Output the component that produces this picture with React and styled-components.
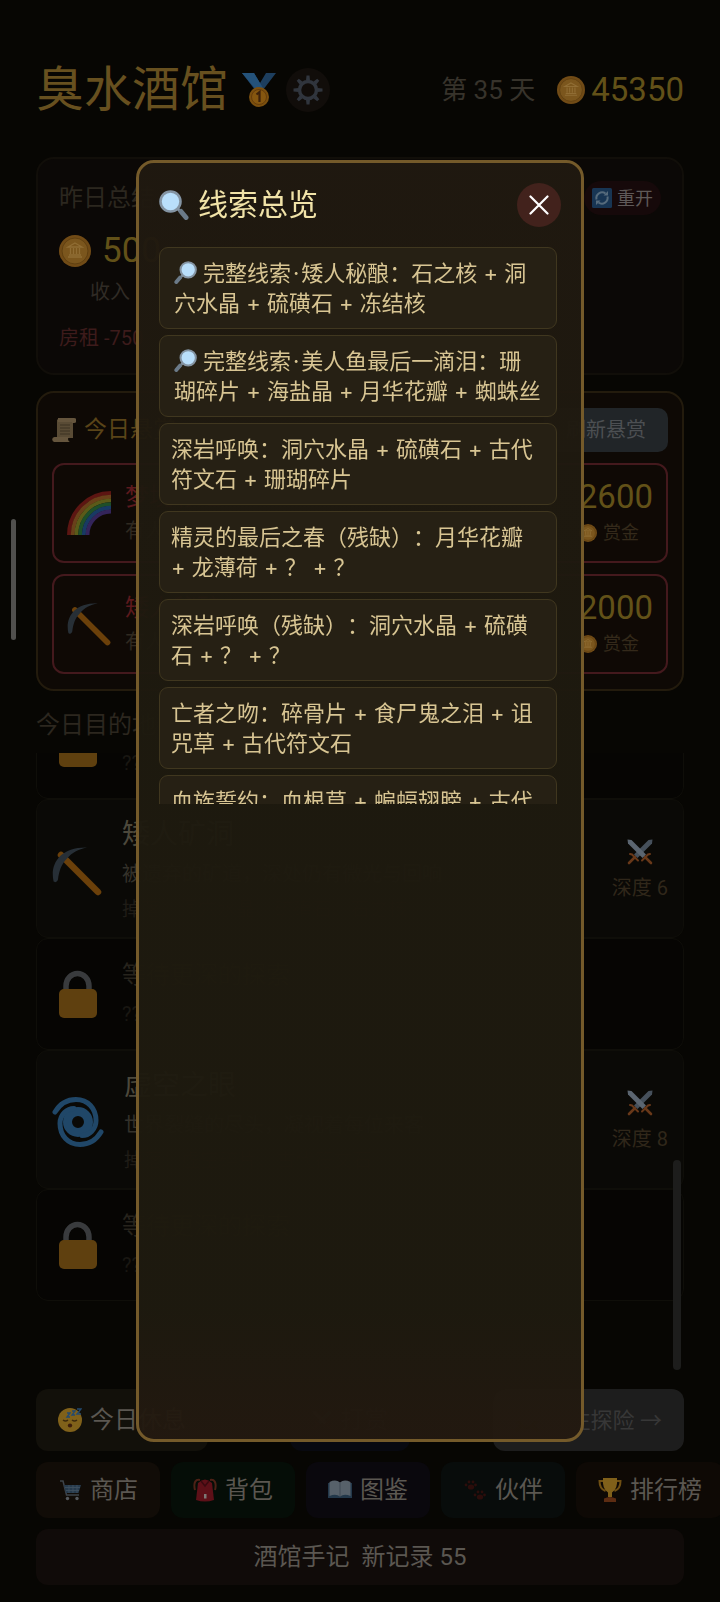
import React from "react";
import styled, { createGlobalStyle } from "styled-components";

const Global = createGlobalStyle`
  * { box-sizing: border-box; }
  body {
    margin: 0;
    background: #070603;
    color: #5a554c;
    font-family: Roboto, "Noto Sans CJK SC", sans-serif;
    line-height: 1.5;
    text-spacing-trim: space-all;
  }
  button { font: inherit; border: 0; cursor: pointer; }
  h1, h2, h3, p, ul { margin: 0; padding: 0; font-weight: 400; }
  ul { list-style: none; }
  svg { display: block; flex: none; }
`;

/* ---------- icons ---------- */

const Svg = ({ size, box = 24, children }) => (
  <svg width={size} height={size} viewBox={`0 0 ${box} ${box}`} fill="none" aria-hidden="true">
    {children}
  </svg>
);

const Coin = ({ size }) => (
  <Svg size={size} box={32}>
    <circle cx="16" cy="16" r="16" fill="#714b16" />
    <circle cx="16" cy="16" r="13" fill="#7b561d" stroke="#604011" strokeWidth="1" />
    <path d="M16 8l7 4H9zM9 22h14M10 20h12M11.500 13v6M14.500 13v6M17.500 13v6M20.500 13v6" stroke="#906d34" strokeWidth="1.300" />
  </Svg>
);

const Medal = () => (
  <Svg size={34} box={34}>
    <path d="M0 0h12l6 10 6-10h10L21 17h-8z" fill="#1d3e5e" />
    <path d="M0 0h12l9 15-6 3z" fill="#24527a" />
    <circle cx="17" cy="24" r="10" fill="#7b4f0e" />
    <circle cx="17" cy="24" r="7.500" fill="#85560f" stroke="#653c0b" />
    <path d="M14.500 21.500l3-2.500v10" stroke="#3c210b" strokeWidth="2.200" />
  </Svg>
);

const Gear = () => (
  <Svg size={30} box={30}>
    <circle cx="15" cy="15" r="8.500" stroke="#30353d" strokeWidth="3.500" />
    {[0, 45, 90, 135, 180, 225, 270, 315].map((a) => (
      <path key={a} d="M13 5.500l.5-5h3l.5 5z" fill="#30353d" transform={`rotate(${a} 15 15)`} />
    ))}
  </Svg>
);

const Magnifier = ({ size, flip }) => (
  <Svg size={size} box={30}>
    <g transform={flip ? "translate(30 0) scale(-1 1)" : undefined}>
      <path d="M18 18l5 5" stroke="#8896a3" strokeWidth="3" />
      <path d="M22 21.500l5 6" stroke="#6b7a88" strokeWidth="5" strokeLinecap="round" />
      <circle cx="11.500" cy="11.500" r="10" fill="#b9dffb" stroke="#8494a3" strokeWidth="2.600" />
    </g>
  </Svg>
);

const Close = () => (
  <Svg size={20} box={20}>
    <path d="M1.500 1.500l17 17M18.500 1.500l-17 17" stroke="#fff" strokeWidth="2.200" strokeLinecap="round" />
  </Svg>
);

const Refresh = () => (
  <Svg size={20} box={20}>
    <rect width="20" height="20" rx="1.500" fill="#183553" />
    <path d="M4.500 11.500a5.800 5.800 0 0 1 9-6M15.500 8.500a5.800 5.800 0 0 1-9 6" stroke="#566b7c" strokeWidth="2" />
    <path d="M11.500 7.500h4.500V3zM8.500 12.500H4V17z" fill="#566b7c" />
  </Svg>
);

const Scroll = () => (
  <Svg size={24}>
    <path d="M5 1.500h16v18.500H5z" fill="#594b35" />
    <path d="M6 0h16a2.500 2.500 0 0 1 0 5h-2V4H6z" fill="#65553d" />
    <path d="M2.500 19H17a3 3 0 0 0 3 5H3a2.500 2.500 0 0 1-.5-5z" fill="#65553d" />
    <path d="M8 7h10M8 10h10M8 13h10M8 16h10" stroke="#3d3222" strokeWidth="1" />
  </Svg>
);

const Rainbow = () => (
  <Svg size={44} box={44}>
    {["#5c1512", "#69401a", "#5b5a19", "#1f4f29", "#183a63", "#33245a"].map((c, i) => (
      <path key={c} d={`M${2 + i * 3.7} 44A${42 - i * 3.7} ${42 - i * 3.7} 0 0 1 44 ${2 + i * 3.7}`} stroke={c} strokeWidth="3.900" />
    ))}
  </Svg>
);

const Pickaxe = ({ size }) => (
  <Svg size={size} box={50}>
    <path d="M9 9l37 37" stroke="#6b400a" strokeWidth="6.500" strokeLinecap="round" />
    <path d="M1.500 35C-2 19 7 1 35 1.500c-9 2-15 5-20 11-6 6-8 13-9 21-1 3-4 3.500-4.500 1.500z" fill="#272f36" />
  </Svg>
);

const Lock = () => (
  <Svg size={50} box={50}>
    <path d="M14 23v-6a11.500 12.500 0 0 1 23 0v6" stroke="#393b3d" strokeWidth="5.500" />
    <rect x="7" y="20" width="38" height="29" rx="5" fill="#5f400f" />
  </Svg>
);

const Vortex = () => (
  <Svg size={52} box={52}>
    <g stroke="#204768" strokeWidth="5" strokeLinecap="round">
      <circle cx="26" cy="26" r="10.500" strokeWidth="9" />
      <path d="M3 16C9 6 16 3.500 24 3.500c12 0 20 9 20 21 0 9-7 15-14 15" />
      <path d="M49 36c-6 10-13 12.500-21 12.500-12 0-20-9-20-21 0-9 7-15 14-15" />
    </g>
  </Svg>
);

const Swords = ({ size = 26, dim }) => (
  <Svg size={size} box={26}>
    <g opacity={dim ? 0.3 : 1}>
      <path d="M8 18l-6 6M18 18l6 6" stroke="#683819" strokeWidth="2.600" strokeLinecap="round" />
      <path d="M25.500.5l-.5 4L10.500 19 7 15.500 21.500 1z" fill="#46505b" />
      <path d="M.5.500l.5 4L15.500 19l3.500-3.500L4.500 1z" fill="#5b6570" />
      <path d="M3 15l2 .5 6 6M23 15l-2 .5-6 6" stroke="#683819" strokeWidth="2" strokeLinecap="round" />
    </g>
  </Svg>
);

const Sleepy = () => (
  <Svg size={24}>
    <circle cx="12" cy="12" r="12" fill="#80611a" />
    <path d="M5 12q2.500 2 5 0M14 12q2.500 2 5 0" stroke="#3d2a0c" strokeWidth="1.500" />
    <ellipse cx="12" cy="17.500" rx="2.200" ry="2" fill="#3d1d0c" />
    <path d="M9 5h3l-3 4h3M14 3h3l-3 4h3M19 1h4l-4 5h4" stroke="#234a70" strokeWidth="1.400" />
  </Svg>
);

const Cart = () => (
  <Svg size={24}>
    <path d="M2 3h3l3.500 14H21" stroke="#3d434a" strokeWidth="1.500" />
    <path d="M6 7h17l-2.500 8H8z" fill="#263a4c" />
    <path d="M7 9.500h15M8 12.500h13M11 7v8M15 7v8M19 7v8" stroke="#415261" strokeWidth=".8" />
    <circle cx="9.500" cy="20.500" r="1.700" fill="#55595e" />
    <circle cx="19" cy="20.500" r="1.700" fill="#55595e" />
  </Svg>
);

const Backpack = () => (
  <Svg size={24}>
    <path d="M2 12C0 4 3 1 7 2M22 12c2-8-1-11-5-10" stroke="#4d2116" strokeWidth="2" />
    <path d="M5 5q7-7 14 0l2 17q-9 3-18 0z" fill="#5d1018" />
    <path d="M8 3l4 5 4-5" stroke="#3a0a10" strokeWidth="1.500" />
    <rect x="11" y="16" width="2.500" height="4.500" fill="#7d7876" />
  </Svg>
);

const Book = () => (
  <Svg size={24}>
    <path d="M0 5h24v15H0z" fill="#23384a" />
    <path d="M1.500 4Q8 1 12 4.500 16 1 22.500 4v14Q16 15.500 12 18.500 8 15.500 1.500 18z" fill="#57616a" />
    <path d="M12 4.500v14" stroke="#414b54" />
  </Svg>
);

const Paws = () => (
  <Svg size={24}>
    <g fill="#2c0d0b">
      {[[3, 4], [12, 14]].map(([x, y]) => (
        <g key={x} transform={`translate(${x} ${y})`}>
          <ellipse cx="5" cy="5" rx="3.200" ry="2.600" />
          <circle cx="0" cy="3" r="1.400" />
          <circle cx="3" cy="0" r="1.400" />
          <circle cx="7" cy="0" r="1.400" />
          <circle cx="9.500" cy="3" r="1.400" />
        </g>
      ))}
    </g>
  </Svg>
);

const Trophy = () => (
  <Svg size={24}>
    <path d="M6 3H1.500q0 8 6 10M18 3h4.500q0 8-6 10" stroke="#6f4f13" strokeWidth="2" />
    <path d="M5 0h14q1 11-5 14.500V19h-4v-4.500Q4 11 5 0z" fill="#80601a" />
    <path d="M6 20.500q6-3 12 0V24H6z" fill="#5d2c12" />
  </Svg>
);

/* ---------- page ---------- */

const Page = styled.main`
  height: 100vh;
  min-height: 1500px;
  padding: 56px 36px 17px;
  display: flex;
  flex-direction: column;
  overflow: hidden;
`;

const Header = styled.header`
  height: 68px;
  margin-bottom: 33px;
  display: flex;
  align-items: center;
  flex: none;
`;

const Title = styled.h1`
  font-size: 48px;
  line-height: 64px;
  color: #67501f;
  margin-right: 14px;
`;

const GearButton = styled.button`
  width: 44px;
  height: 44px;
  margin-left: 10px;
  padding: 0;
  border-radius: 50%;
  background: #110d0a;
  display: grid;
  place-items: center;
`;

const Day = styled.span`
  margin-left: auto;
  margin-right: 22px;
  font-size: 26px;
  color: #37332b;
`;

const Amount = styled.span`
  display: flex;
  align-items: center;
  gap: ${(p) => p.$gap || 6}px;
  font-size: ${(p) => p.$size || 33}px;
  line-height: 40px;
  color: #625118;
`;

const Panel = styled.section`
  flex: none;
  border: 2px solid ${(p) => p.$line};
  border-radius: 18px;
  background: ${(p) => p.$bg};
`;

const Summary = styled(Panel)`
  height: 218px;
  padding: 21px 21px;
  margin-bottom: 16px;
`;

const Between = styled.div`
  display: flex;
  align-items: center;
  justify-content: space-between;
`;

const Label = styled.h2`
  font-size: 24px;
  line-height: 36px;
  color: #2c271f;
`;

const PlacesLabel = styled(Label)`
  flex: none;
  padding: 16px 0 10px;
`;

const RestartButton = styled.button`
  display: flex;
  align-items: center;
  gap: 5px;
  height: 34px;
  padding: 0 8px;
  border-radius: 17px;
  background: #16090a;
  color: #5f5958;
  font-size: 18px;
`;

const Income = styled.div`
  margin-top: 15px;
  display: inline-flex;
  flex-direction: column;
  align-items: center;
`;

const Small = styled.p`
  font-size: ${(p) => p.$size || 20}px;
  line-height: ${(p) => p.$lh || 30}px;
  margin-top: ${(p) => p.$top || 0}px;
  color: ${(p) => p.$color};
  white-space: nowrap;
`;

const Bounties = styled(Panel)`
  padding: 15px 14px;
  display: grid;
  gap: 11px;
`;

const IconLabel = styled.h2`
  display: flex;
  align-items: center;
  gap: 8px;
  font-size: 23px;
  color: #5a4418;
`;

const RefreshButton = styled.button`
  height: 44px;
  padding: 0 22px;
  border-radius: 10px;
  background: #212528;
  color: #4c4f52;
  font-size: 20px;
`;

const BountyRow = styled.article`
  height: 100px;
  border: 2px solid #44191d;
  border-radius: 12px;
  background: #0f0905;
  padding: 0 13px;
  display: flex;
  align-items: center;
  gap: 14px;
`;

const Grow = styled.div`
  flex: 1;
  min-width: 0;
`;

const BountyTitle = styled.h3`
  font-size: 24px;
  line-height: 36px;
  color: #5c191d;
`;

const Reward = styled.div`
  display: flex;
  flex-direction: column;
  align-items: flex-end;
`;

const RewardNote = styled.div`
  display: flex;
  align-items: center;
  gap: 6px;
  padding-right: 14px;
  font-size: 18px;
  line-height: 32px;
  color: #34291a;
`;

const Destinations = styled.section`
  flex: 1;
  min-height: 0;
  margin-bottom: 17px;
  padding-bottom: 71px;
  position: relative;
  display: flex;
  flex-direction: column;
  justify-content: flex-end;
  overflow: hidden;
`;

const Thumb = styled.span`
  position: absolute;
  border-radius: 4px;
`;

const ListThumb = styled(Thumb)`
  right: 3px;
  bottom: 2px;
  width: 8px;
  height: 210px;
  background: #1d1d1c;
`;

const PageThumb = styled(Thumb)`
  left: 11px;
  top: 519px;
  width: 5px;
  height: 121px;
  background: #51504e;
`;

const Place = styled.article`
  flex: none;
  height: ${(p) => (p.$locked ? 112 : 139)}px;
  padding: ${(p) => (p.$locked ? 0 : 5)}px 15px 0;
  border: 1px solid #0f0e09;
  border-radius: 12px;
  background: ${(p) => (p.$locked ? "#060503" : "#0a0906")};
  display: flex;
  align-items: center;
  gap: 20px;
`;

const PlaceName = styled.h3`
  font-size: ${(p) => (p.$locked ? 24 : 28)}px;
  line-height: 40px;
  color: ${(p) => (p.$locked ? "#26231c" : "#4c483b")};
`;

const Depth = styled.div`
  display: flex;
  flex-direction: column;
  align-items: center;
  gap: 8px;
`;

const Actions = styled.nav`
  flex: none;
  display: flex;
  justify-content: ${(p) => (p.$spread ? "space-between" : "flex-start")};
  gap: 11px;
  margin-bottom: 11px;
`;

const Action = styled.button`
  flex: none;
  height: ${(p) => (p.$tall ? 62 : 56)}px;
  padding: 0 22px;
  border-radius: 12px;
  background: ${(p) => p.$bg};
  color: ${(p) => p.$color || "#5b5751"};
  font-size: ${(p) => p.$size || 24}px;
  display: flex;
  align-items: center;
  justify-content: center;
  gap: 8px;
  white-space: pre;
`;

/* ---------- dialog ---------- */

const Backdrop = styled.div`
  position: fixed;
  inset: 0;
  display: grid;
  place-items: center;
`;

const Dialog = styled.section`
  width: calc(100% - 272px);
  height: 80vh;
  padding: 20px;
  border: 3px solid #745a2a;
  border-radius: 18px;
  background: linear-gradient(rgba(32, 25, 16, 0.97), rgba(30, 26, 15, 0.97) 45%, rgba(30, 26, 15, 0.97) 90%, rgba(35, 25, 16, 0.97));
  background-clip: padding-box;
`;

const DialogTitle = styled.h2`
  display: flex;
  align-items: center;
  gap: 9px;
  font-size: 30px;
  line-height: 44px;
  color: #f1e3a8;
`;

const CloseButton = styled.button`
  width: 44px;
  height: 44px;
  padding: 0;
  border-radius: 50%;
  background: #42221c;
  display: grid;
  place-items: center;
`;

const Clues = styled.ul`
  margin-top: 20px;
  padding-right: 4px;
  height: 557px;
  overflow: hidden;
  display: flex;
  flex-direction: column;
  gap: 6px;
`;

const Clue = styled.li`
  flex: none;
  padding: 10px 8px 10px ${(p) => (p.$complete ? 14 : 11)}px;
  border: 1px solid #40371f;
  border-radius: 9px;
  background: #262014;
  color: #d8c593;
  font-family: Inter, "Noto Sans CJK SC", sans-serif;
  font-size: 22px;
  line-height: 30px;
  white-space: pre-line;

  svg {
    display: inline-block;
    vertical-align: -3px;
    margin-right: 6px;
  }
`;

const Dot = styled.span`
  margin: 0 2px;
`;

const bounties = [
  { name: "梦境彩虹", icon: <Rainbow />, reward: "2600" },
  { name: "矮人秘酿", icon: <Pickaxe size={44} />, reward: "2000" },
];

const places = [
  { locked: true },
  { name: "矮人矿洞", text: "被遗弃的矿道，深处仍有微光与回响", drop: "掉落：洞穴水晶、硫磺石、石之核", icon: <Pickaxe size={50} />, depth: 6 },
  { locked: true },
  { name: "虚空之眼", text: "世界裂缝的尽头，凝视着每位来客", drop: "掉落：虚空碎片、古代符文石", icon: <Vortex />, depth: 8 },
  { locked: true },
];

const clues = [
  { complete: true, text: "矮人秘酿：石之核 + 洞\n穴水晶 + 硫磺石 + 冻结核" },
  { complete: true, text: "美人鱼最后一滴泪：珊\n瑚碎片 + 海盐晶 + 月华花瓣 + 蜘蛛丝" },
  { text: "深岩呼唤：洞穴水晶 + 硫磺石 + 古代符文石 + 珊瑚碎片" },
  { text: "精灵的最后之春（残缺）：月华花瓣\n+ 龙薄荷 + ？ + ？" },
  { text: "深岩呼唤（残缺）：洞穴水晶 + 硫磺石 + ？ + ？" },
  { text: "亡者之吻：碎骨片 + 食尸鬼之泪 + 诅咒草 + 古代符文石" },
  { text: "血族誓约：血根草 + 蝙蝠翅膀 + 古代符文石" },
];

const tabs = [
  { name: "商店", icon: <Cart />, bg: "#110c07" },
  { name: "背包", icon: <Backpack />, bg: "#050d07" },
  { name: "图鉴", icon: <Book />, bg: "#0a080d" },
  { name: "伙伴", icon: <Paws />, bg: "#080c0b" },
  { name: "排行榜", icon: <Trophy />, bg: "#0e0905" },
];

export default function App() {
  return (
    <>
      <Global />
      <Page lang="zh-CN">
        <Header>
          <Title>臭水酒馆</Title>
          <Medal />
          <GearButton aria-label="设置"><Gear /></GearButton>
          <Day>第 35 天</Day>
          <Amount><Coin size={28} />45350</Amount>
        </Header>

        <Summary $line="#110e09" $bg="#0b0806">
          <Between>
            <Label>昨日总结</Label>
            <RestartButton><Refresh />重开</RestartButton>
          </Between>
          <Income>
            <Amount $size={35} $gap={11}><Coin size={32} />500</Amount>
            <Small $top={6} $color="#302b25">收入</Small>
          </Income>
          <Small $top={16} $color="#3d1b1b">房租 -750</Small>
        </Summary>

        <Bounties $line="#231b0d" $bg="#0e0905">
          <Between>
            <IconLabel><Scroll />今日悬赏</IconLabel>
            <RefreshButton>刷新悬赏</RefreshButton>
          </Between>
          {bounties.map((b) => (
            <BountyRow key={b.name}>
              {b.icon}
              <Grow>
                <BountyTitle>{b.name}</BountyTitle>
                <Small $color="#302920" $lh={32}>有人悬赏</Small>
              </Grow>
              <Reward>
                <Amount>{b.reward}</Amount>
                <RewardNote><Coin size={18} />赏金</RewardNote>
              </Reward>
            </BountyRow>
          ))}
        </Bounties>

        <PlacesLabel>今日目的地</PlacesLabel>
        <Destinations>
          {places.map((p, i) => (
            <Place key={i} $locked={p.locked}>
              {p.locked ? <Lock /> : p.icon}
              <Grow>
                <PlaceName $locked={p.locked}>{p.locked ? "等待更深的探索" : p.name}</PlaceName>
                <Small $color={p.locked ? "#191712" : "#34312a"} $lh={38}>{p.locked ? "???" : p.text}</Small>
                {!p.locked && <Small $color="#1f1c16" $size={19} $lh={34}>{p.drop}</Small>}
              </Grow>
              {!p.locked && (
                <Depth>
                  <Swords />
                  <Small $color="#30271a">深度 {p.depth}</Small>
                </Depth>
              )}
            </Place>
          ))}
          <ListThumb />
        </Destinations>

        <Actions $spread>
          <Action $tall $bg="#12100a"><Sleepy />今日休息</Action>
          <Action $tall $bg="#080910" $color="#24242c"><Swords size={20} dim />打赏</Action>
          <Action $tall $bg="#1d1d1d" $color="#373737" $size={22}><Swords size={24} dim />前往探险 →</Action>
        </Actions>
        <Actions>
          {tabs.map((t) => (
            <Action key={t.name} $bg={t.bg}>{t.icon}{t.name}</Action>
          ))}
        </Actions>
        <Action $bg="#100b09">酒馆手记  新记录 55</Action>
      </Page>

      <Backdrop lang="zh-CN">
        <PageThumb />
        <Dialog role="dialog" aria-labelledby="clue-title">
          <Between>
            <DialogTitle id="clue-title"><Magnifier size={30} />线索总览</DialogTitle>
            <CloseButton aria-label="关闭"><Close /></CloseButton>
          </Between>
          <Clues>
            {clues.map((c) => (
              <Clue key={c.text} $complete={c.complete}>
                {c.complete && <><Magnifier size={23} flip />完整线索<Dot>·</Dot></>}
                {c.text}
              </Clue>
            ))}
          </Clues>
        </Dialog>
      </Backdrop>
    </>
  );
}
